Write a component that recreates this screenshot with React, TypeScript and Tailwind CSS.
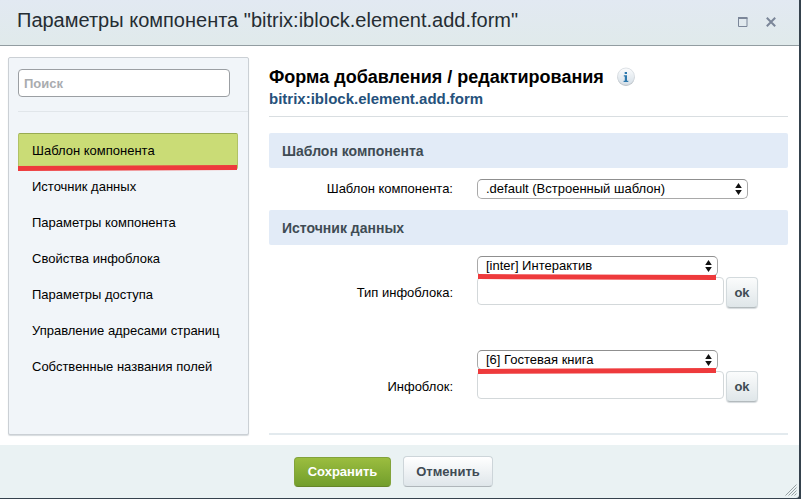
import { useState } from "react";

const navItems = [
  "Шаблон компонента",
  "Источник данных",
  "Параметры компонента",
  "Свойства инфоблока",
  "Параметры доступа",
  "Управление адресами страниц",
  "Собственные названия полей",
];

function Underline({ points, className }: { points: string; className: string }) {
  return (
    <svg className={`absolute h-[6px] pointer-events-none ${className}`} viewBox="0 0 240 6" preserveAspectRatio="none" aria-hidden="true">
      <polygon points={points} fill="#ee3a3c" />
    </svg>
  );
}

function Select({ id, option, className }: { id: string; option: string; className: string }) {
  return (
    <div className={`relative ${className}`}>
      <select
        id={id}
        className="block w-full h-5 appearance-none rounded-[5px] border border-[#a9a9a9] border-t-[#8f8f8f] bg-white pl-2 pr-6 text-[13px] leading-4 text-black"
      >
        <option>{option}</option>
      </select>
      <svg className="absolute right-[6px] top-1 w-[7px] h-3 pointer-events-none" viewBox="0 0 7 12" aria-hidden="true">
        <path d="M3.5 0 6.8 5H.2zM3.5 12 6.8 7H.2z" fill="#111" />
      </svg>
    </div>
  );
}

function SectionTitle({ children }: { children: string }) {
  return (
    <h2 className="h-[35px] rounded-xs bg-[#e2ebf7] px-[13px] text-sm leading-[36px] font-bold text-[#3f4b54]">
      {children}
    </h2>
  );
}

function IblockField({ id, label, option, underline }: { id: string; label: string; option: string; underline: string }) {
  return (
    <div className="grid grid-cols-[184px_1fr] gap-6">
      <label htmlFor={id} className="self-end text-right leading-[31px]">
        {label}
      </label>
      <div className="relative">
        <Select id={id} option={option} className="w-[241px]" />
        <div className="mt-px flex gap-[2px]">
          <input
            type="text"
            aria-label={label}
            className="h-7 w-[247px] rounded-[4px] border border-[#d3d8da] bg-white px-2"
          />
          <button
            type="button"
            className="h-[31px] w-8 rounded-[4px] border border-[#d3dadd] border-b-[#b3babd] bg-gradient-to-b from-[#fbfcfc] to-[#dfe6e9] text-[13px] font-bold text-[#3f4b54] shadow-[0_1px_1px_#d5dadd]"
          >
            ok
          </button>
        </div>
        <Underline points={underline} className="left-px top-[18px] w-[238px]" />
      </div>
    </div>
  );
}

export default function App() {
  const [active, setActive] = useState(0);

  return (
    <div className="flex min-h-screen flex-col bg-[#35424d] pr-[2px] pb-px font-['Liberation_Sans',Arial,sans-serif] text-[13px] text-black">
      <header className="flex h-[46px] items-center justify-between border-b border-[#929da1] bg-gradient-to-b from-[#e2e9f2] to-[#e0eaeb] pl-[17px] pr-[23px] pb-[2px]">
        <h1 className="pb-1 text-xl text-[#252d33]">Параметры компонента "bitrix:iblock.element.add.form"</h1>
        <div className="flex gap-[18px]">
          <button type="button" aria-label="Развернуть">
            <svg width="10" height="10" viewBox="0 0 10 10">
              <path d="M.5 1h8.500v8.500H.5z" fill="none" stroke="#7b8699" />
              <path d="M0 1h9.500" stroke="#7b8699" strokeWidth="2" />
            </svg>
          </button>
          <button type="button" aria-label="Закрыть">
            <svg width="10" height="10" viewBox="0 0 10 10">
              <path d="m.8.8 8.400 8.400m0-8.400-8.400 8.400" stroke="#7b8699" strokeWidth="2" />
            </svg>
          </button>
        </div>
      </header>

      <div className="flex flex-1 bg-white pt-[11px] pr-[11px] pb-[10px] pl-2">
        {/* Sidebar */}
        <aside className="w-[241px] shrink-0 rounded-xs border border-[#cbd0d5] bg-[#f1f5f9] pl-[9px] shadow-[0_1px_1px_#d8dcdf]">
          <div className="border-b border-[#e1e6ea] pt-[11px] pb-[14px]">
            <input
              type="search"
              aria-label="Поиск"
              placeholder="Поиск"
              className="block h-7 w-[212px] rounded-[4px] border border-[#9b9fa3] bg-white px-[5px] text-[13px] placeholder:font-bold placeholder:text-[#a9acaf]"
            />
          </div>
          <nav className="mt-[21px] mr-[10px] flex flex-col">
            {navItems.map((item, i) => (
              <button
                key={item}
                type="button"
                onClick={() => setActive(i)}
                className={
                  i === active
                    ? "relative h-9 rounded-xs border border-[#b1c266] border-t-[#98ab52] bg-[#cadc76] px-[13px] text-left"
                    : "relative h-9 px-[14px] text-left"
                }
              >
                {item}
                {i === active && <Underline points="0,1 240,0 240,5 0,6" className="-left-px -bottom-[3px] w-[219px]" />}
              </button>
            ))}
          </nav>
        </aside>

        {/* Parameters */}
        <main className="ml-5 min-w-0 flex-1 border-b-2 border-[#e3eaee]">
          <div className="border-b border-[#d9dee1] pt-2 pb-2">
            <div className="flex items-center gap-3">
              <p className="text-lg leading-6 font-bold">Форма добавления / редактирования</p>
              <button type="button" aria-label="Справка">
                <svg width="20" height="20" viewBox="0 0 20 20">
                  <defs>
                    <linearGradient id="info" x1="0" y1="0" x2="0" y2="1">
                      <stop offset="0" stopColor="#fbfcfd" />
                      <stop offset="1" stopColor="#d5dfe7" />
                    </linearGradient>
                  </defs>
                  <circle cx="10" cy="10.500" r="8.500" fill="#b7bec4" />
                  <circle cx="10" cy="9.500" r="8.500" fill="url(#info)" stroke="#d0d6db" strokeWidth=".7" />
                  <path d="M8.700 5H11v2H8.700zM7.800 8.200H11v5.600h1.300V15H7.600v-1.200h1.200V9.400h-1z" fill="#2c78ad" />
                </svg>
              </button>
            </div>
            <p className="text-[15px] leading-[19px] font-bold text-[#25517b]">bitrix:iblock.element.add.form</p>
          </div>

          <div className="mt-4">
            <SectionTitle>Шаблон компонента</SectionTitle>
            <div className="my-[11px] grid grid-cols-[184px_1fr] gap-6">
              <label htmlFor="template" className="text-right leading-5">
                Шаблон компонента:
              </label>
              <Select id="template" option=".default (Встроенный шаблон)" className="w-[271px]" />
            </div>

            <SectionTitle>Источник данных</SectionTitle>
            <div className="mt-[11px] flex flex-col gap-[42px]">
              <IblockField id="type" label="Тип инфоблока:" option="[inter] Интерактив" underline="0,0 240,1 240,6 0,5" />
              <IblockField id="iblock" label="Инфоблок:" option="[6] Гостевая книга" underline="0,1 240,0 240,5 0,6" />
            </div>
          </div>
        </main>
      </div>

      <footer className="relative flex h-[53px] items-center justify-center gap-3 rounded-br-[3px] bg-[#eaf2f3] pr-3">
        <button
          type="button"
          className="h-[30px] w-[97px] rounded-[4px] border border-[#82a33a] border-b-[#658529] bg-gradient-to-b from-[#9bbd3f] to-[#729e2c] text-[13px] font-bold text-white"
        >
          Сохранить
        </button>
        <button
          type="button"
          className="h-[31px] w-[90px] rounded-[4px] border border-[#cdd5d9] border-b-[#afb6ba] bg-gradient-to-b from-white to-[#dfe6ea] text-[13px] font-bold text-[#3f4b54]"
        >
          Отменить
        </button>
        <svg className="absolute right-[2px] bottom-[2px]" width="12" height="12" viewBox="0 0 12 12" aria-hidden="true">
          <path d="M.5 11.500 11.500.5M3.500 11.500l8-8M6.500 11.500l5-5M9.500 11.500l2-2" stroke="#8d979b" strokeWidth=".9" />
        </svg>
      </footer>
    </div>
  );
}
